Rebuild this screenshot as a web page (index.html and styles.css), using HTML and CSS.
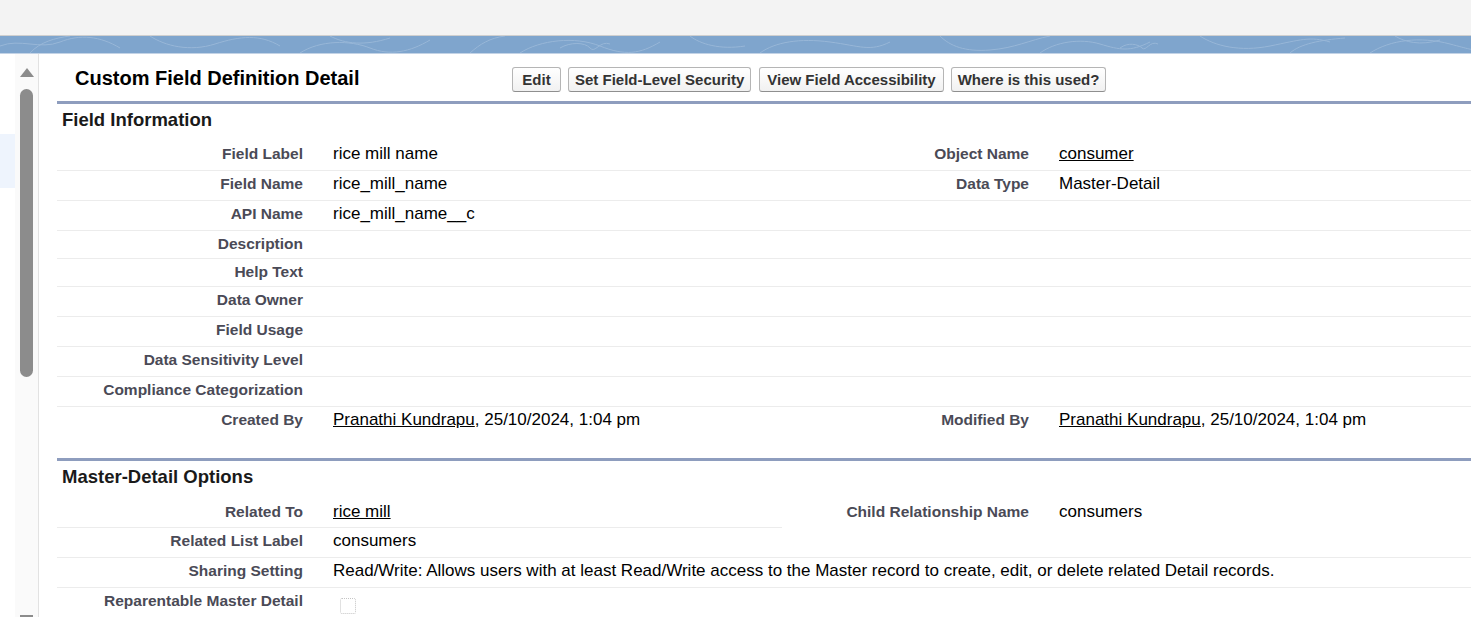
FILE: index.html
```html
<!DOCTYPE html>
<html lang="en">
<head>
<meta charset="utf-8">
<title>Custom Field Definition Detail</title>
<link rel="stylesheet" href="styles.css">
</head>
<body>
<div class="topbar"></div>
<div class="band">
  <svg class="band-art" viewBox="0 0 1471 17" preserveAspectRatio="none" aria-hidden="true">
    <g fill="none" stroke="#a3bfdd" stroke-width="1" opacity="0.7">
      <path d="M0 10 C20 2 40 14 60 6 S100 0 120 12"/>
      <path d="M30 17 C40 6 55 2 70 0"/>
      <path d="M150 0 C165 10 190 16 215 8 S260 -2 280 10"/>
      <path d="M300 17 C320 4 350 4 370 12 S410 16 430 4"/>
      <path d="M330 0 C345 8 365 10 390 2"/>
      <path d="M470 17 C480 8 490 2 505 0"/>
      <path d="M520 17 C540 4 575 0 600 10 S640 18 660 6"/>
      <path d="M560 12 C570 6 585 6 590 12 S600 4 610 8"/>
      <path d="M690 0 C700 8 720 14 745 10"/>
      <path d="M760 17 C775 6 800 2 830 6 S870 16 890 6"/>
      <path d="M940 0 C950 10 965 16 990 14 S1030 4 1050 0"/>
      <path d="M1040 17 C1055 6 1080 2 1100 8 S1130 16 1150 6"/>
      <path d="M1120 12 C1128 6 1138 8 1142 12 S1150 4 1158 8"/>
      <path d="M1200 0 C1215 10 1240 16 1270 10 S1310 0 1330 6"/>
      <path d="M1290 17 C1300 8 1320 4 1345 2"/>
      <path d="M1370 17 C1390 4 1420 0 1450 8 S1471 14 1480 10"/>
      <path d="M1395 0 C1405 6 1420 10 1440 4"/>
    </g>
  </svg>
</div>
<div class="layout">
  <aside class="side">
    <div class="side-left"><div class="side-hl"></div></div>
    <div class="scroll">
      <div class="arrow-up"></div>
      <div class="thumb"></div>
      <div class="arrow-down"></div>
    </div>
  </aside>
  <main class="main">
    <div class="page-head">
      <h2 class="title">Custom Field Definition Detail</h2>
      <div class="buttons">
        <button class="btn btn-edit">Edit</button>
        <button class="btn">Set Field-Level Security</button>
        <button class="btn btn-view">View Field Accessibility</button>
        <button class="btn">Where is this used?</button>
      </div>
    </div>

    <section class="block">
      <h3 class="block-title">Field Information</h3>
      <div class="row">
        <div class="lbl">Field Label</div><div class="val">rice mill name</div>
        <div class="lbl">Object Name</div><div class="val"><a class="link" href="#">consumer</a></div>
      </div>
      <div class="row">
        <div class="lbl">Field Name</div><div class="val">rice_mill_name</div>
        <div class="lbl">Data Type</div><div class="val">Master-Detail</div>
      </div>
      <div class="row">
        <div class="lbl">API Name</div><div class="val">rice_mill_name__c</div>
        <div class="lbl"></div><div class="val"></div>
      </div>
      <div class="row short">
        <div class="lbl">Description</div><div class="val wide"></div>
      </div>
      <div class="row short">
        <div class="lbl">Help Text</div><div class="val wide"></div>
      </div>
      <div class="row">
        <div class="lbl">Data Owner</div><div class="val wide"></div>
      </div>
      <div class="row">
        <div class="lbl">Field Usage</div><div class="val wide"></div>
      </div>
      <div class="row">
        <div class="lbl">Data Sensitivity Level</div><div class="val wide"></div>
      </div>
      <div class="row">
        <div class="lbl">Compliance Categorization</div><div class="val wide"></div>
      </div>
      <div class="row last">
        <div class="lbl">Created By</div><div class="val"><a class="link" href="#">Pranathi Kundrapu</a>, 25/10/2024, 1:04 pm</div>
        <div class="lbl">Modified By</div><div class="val"><a class="link" href="#">Pranathi Kundrapu</a>, 25/10/2024, 1:04 pm</div>
      </div>
    </section>

    <section class="block">
      <h3 class="block-title second">Master-Detail Options</h3>
      <div class="row first">
        <div class="lbl">Related To</div><div class="val"><a class="link" href="#">rice mill</a></div>
        <div class="lbl nb">Child Relationship Name</div><div class="val nb">consumers</div>
      </div>
      <div class="row">
        <div class="lbl">Related List Label</div><div class="val">consumers</div>
        <div class="lbl"></div><div class="val"></div>
      </div>
      <div class="row">
        <div class="lbl">Sharing Setting</div><div class="val wide">Read/Write: Allows users with at least Read/Write access to the Master record to create, edit, or delete related Detail records.</div>
      </div>
      <div class="row end">
        <div class="lbl">Reparentable Master Detail</div><div class="val wide"><span class="checkbox"></span></div>
      </div>
    </section>
  </main>
</div>
</body>
</html>
```
FILE: styles.css
```css
* { box-sizing: border-box; }
html, body {
  margin: 0;
  height: 100%;
  overflow: hidden;
  background: #fff;
  font-family: "Liberation Sans", Arial, sans-serif;
  color: #000;
}
.topbar {
  height: 36px;
  background: #f3f3f3;
  border-bottom: 1px solid #cfcfcf;
}
.band {
  height: 18px;
  background: #7fa5cd;
  border-bottom: 1px solid #c3d3e6;
}
.band-art { display: block; width: 100%; height: 17px; }

.layout {
  display: flex;
  height: calc(100vh - 54px);
}
.side {
  display: flex;
  flex: 0 0 39px;
}
.side-left {
  width: 15px;
  padding-top: 80px;
}
.side-hl {
  height: 54px;
  background: #eef4fd;
}
.scroll {
  width: 24px;
  background: #fafafa;
  border-right: 1px solid #e2e2e2;
  display: flex;
  flex-direction: column;
  align-items: center;
  padding-top: 14px;
}
.arrow-up {
  width: 0; height: 0;
  border-left: 7.5px solid transparent;
  border-right: 7.5px solid transparent;
  border-bottom: 9px solid #8c8c8c;
}
.thumb {
  margin-top: 12px;
  width: 13px;
  height: 288px;
  border-radius: 7px;
  background: #8c8c8c;
}
.arrow-down {
  margin-top: auto;
  width: 13px;
  height: 2px;
  background: #8c8c8c;
}

.main {
  flex: 1;
  margin-left: 18px;
  min-width: 0;
}
.page-head {
  display: flex;
  align-items: center;
  height: 47px;
  padding-top: 4px;
}
.title {
  margin: 0;
  width: 455px;
  padding-left: 18px;
  font-size: 20px;
  line-height: 25px;
  font-weight: bold;
  color: #000;
  position: relative;
  top: -1px;
}
.buttons { display: flex; gap: 7px; }
.btn {
  font-family: "Liberation Sans", Arial, sans-serif;
  font-size: 15px;
  font-weight: bold;
  line-height: 17px;
  height: 25px;
  padding: 3px 6px;
  color: #333;
  background: linear-gradient(#ffffff, #f1f1f1);
  border: 1px solid #b5b5b5;
  border-bottom-color: #8f8f8f;
  border-radius: 3px;
}
.btn-edit { min-width: 49px; }
.btn-view { padding: 3px 7px; margin-left: 1px; }
.block {
  border-top: 3px solid #8e9dbe;
}
.block-title {
  margin: 0;
  height: 37px;
  padding: 5px 0 0 5px;
  font-size: 18.5px;
  line-height: 22px;
  font-weight: bold;
  color: #1a1a1a;
}
.block-title.second { height: 38px; padding-top: 5px; }

.row {
  display: grid;
  grid-template-columns: 256px 469px 257px 1fr;
  height: 30px;
}
.row.short { height: 28px; }
.row.first { height: 29px; }
.row.last { height: 51px; }
.row.end { height: 40px; }
.row > div {
  border-bottom: 1px solid #ececec;
  padding-top: 3px;
  line-height: 20px;
  white-space: nowrap;
}
.row.last > div, .row.end > div, .row > .nb { border-bottom: none; }
.lbl {
  text-align: right;
  padding-right: 10px;
  font-size: 15.5px;
  font-weight: bold;
  color: #4a4a56;
}
.val {
  padding-left: 20px;
  font-size: 17px;
  color: #000;
}
.val.wide { grid-column: span 3; }
.link { color: #000; text-decoration: underline; }
.checkbox {
  display: inline-block;
  width: 16px;
  height: 16px;
  margin: 7px 0 0 7px;
  border: 1px dotted #c4c4c4;
  border-radius: 2px;
  vertical-align: top;
}
```
